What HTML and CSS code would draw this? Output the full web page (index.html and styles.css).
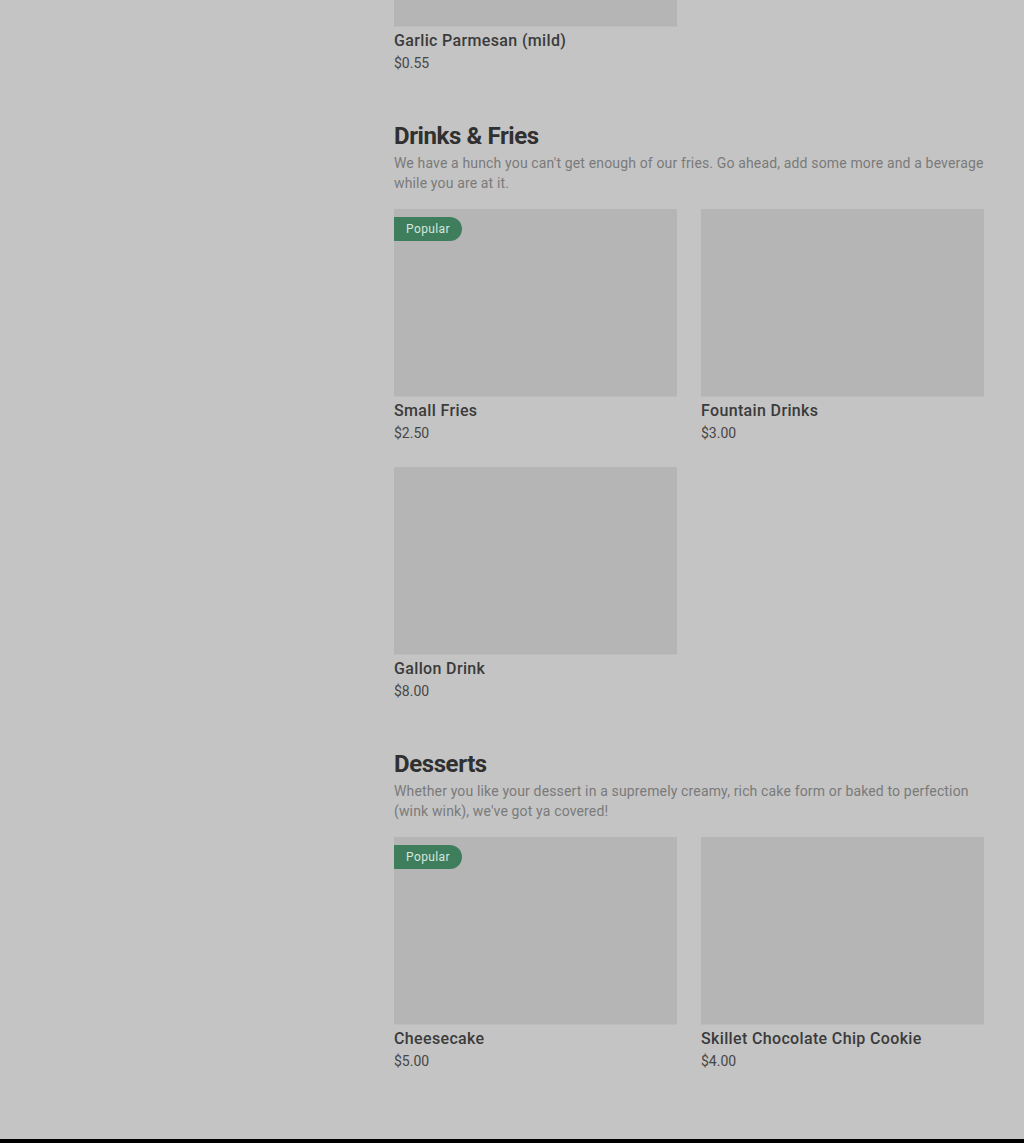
FILE: index.html
```html
<!doctype html>
<html>
<head>
  <title>Menu</title>
  <link rel="stylesheet" href="styles.css">
</head>
<body>

<div class="page">
  <div class="menu">

    <!-- tail of the previous section -->
    <div class="item-grid">
      <div class="item">
        <div class="item-img cut"></div>
        <div class="item-name">Garlic Parmesan (mild)</div>
        <div class="item-price">$0.55</div>
      </div>
    </div>

    <section class="menu-section">
      <h2 class="section-title">Drinks &amp; Fries</h2>
      <p class="section-desc">We have a hunch you can't get enough of our fries. Go ahead, add some more and a beverage while you are at it.</p>
      <div class="item-grid">
        <div class="item">
          <div class="item-img"><span class="badge">Popular</span></div>
          <div class="item-name">Small Fries</div>
          <div class="item-price">$2.50</div>
        </div>
        <div class="item">
          <div class="item-img"></div>
          <div class="item-name">Fountain Drinks</div>
          <div class="item-price">$3.00</div>
        </div>
        <div class="item">
          <div class="item-img"></div>
          <div class="item-name">Gallon Drink</div>
          <div class="item-price">$8.00</div>
        </div>
      </div>
    </section>

    <section class="menu-section">
      <h2 class="section-title">Desserts</h2>
      <p class="section-desc">Whether you like your dessert in a supremely creamy, rich cake form or baked to perfection (wink wink), we've got ya covered!</p>
      <div class="item-grid">
        <div class="item">
          <div class="item-img"><span class="badge">Popular</span></div>
          <div class="item-name">Cheesecake</div>
          <div class="item-price">$5.00</div>
        </div>
        <div class="item">
          <div class="item-img"></div>
          <div class="item-name">Skillet Chocolate Chip Cookie</div>
          <div class="item-price">$4.00</div>
        </div>
      </div>
    </section>

  </div>
</div>

<div class="footer-bar"></div>

</body>
</html>
```

FILE: styles.css
```css
body {
  margin: 0;
  background: #c4c4c4;
  font-family: Roboto, "Liberation Sans", sans-serif;
  height: 1143px;
  overflow: hidden;
  display: flex;
  flex-direction: column;
}

.page {
  flex: 1;
  padding-left: 394px;
}

.menu {
  width: 590px;
}

.item-grid {
  display: grid;
  grid-template-columns: 283px 283px;
  column-gap: 24px;
  row-gap: 24px;
}

.item-img {
  position: relative;
  height: 187px;
  background: #b5b5b5;
  border-bottom: 1px solid #bdbdbd;
}

.item-img.cut {
  height: 26px;
}

.item-name {
  margin-top: 2px;
  font-size: 16px;
  line-height: 24px;
  font-weight: 500;
  letter-spacing: 0.35px;
  color: #3b3b3b;
}

.item-price {
  font-size: 14px;
  line-height: 20px;
  color: #474747;
}

.menu-section {
  padding-top: 47px;
}

.section-title {
  margin: 0;
  font-size: 24px;
  line-height: 32px;
  font-weight: 700;
  letter-spacing: -0.4px;
  color: #303030;
}

.section-desc {
  margin: 1px 0 16px;
  font-size: 14px;
  line-height: 20px;
  letter-spacing: 0.15px;
  color: #7a7a7a;
}

.badge {
  position: absolute;
  top: 8px;
  left: 0;
  height: 24px;
  line-height: 24px;
  padding: 0 12px;
  font-size: 12px;
  letter-spacing: 0.4px;
  color: #d6e6dc;
  background: #3f7e5c;
  border-radius: 0 12px 12px 0;
}

.footer-bar {
  height: 4px;
  background: #000;
}
```
